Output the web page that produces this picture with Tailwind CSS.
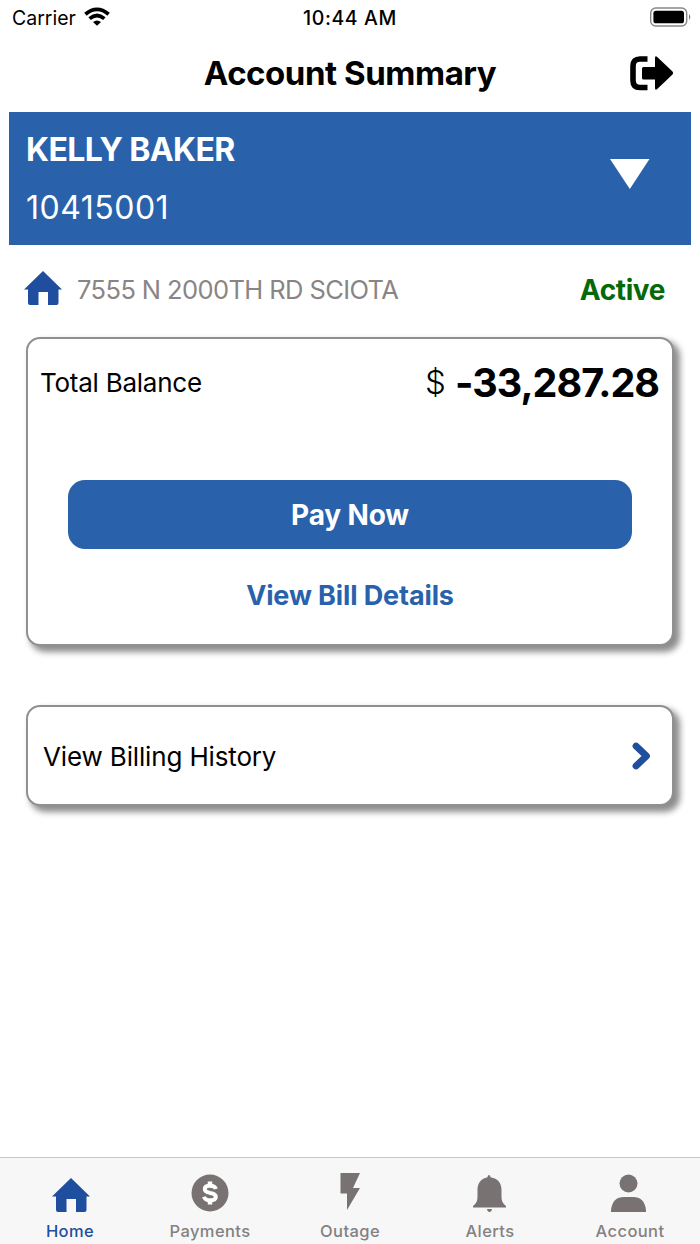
<!DOCTYPE html>
<html lang="en">
<head>
<meta charset="utf-8">
<title>Account Summary</title>
<script src="https://cdn.jsdelivr.net/npm/@tailwindcss/browser@4"></script>
</head>
<body class="bg-white">
<div class="flex flex-col w-[700px] h-[1244px] overflow-hidden bg-white font-['Inter',sans-serif] text-black whitespace-nowrap">
  <header class="h-9 shrink-0 grid grid-cols-3 items-center pl-3 pr-[9px] text-[19.5px] leading-9">
    <div class="flex items-center gap-2">
      <span>Carrier</span>
      <svg class="mt-[-3px]" width="26" height="19" viewBox="0 0 26 19"><g fill="none" stroke="#000" stroke-width="3.8"><path d="M1.4 7.2Q13 -2.4 24.600 7.2"/><path d="M5.600 11.600Q13 5.400 20.400 11.600"/></g><path d="M9 15Q13 11.800 17 15L13 18.800Z"/></svg>
    </div>
    <span class="text-center font-medium tracking-[0.6px] -ml-[3px]">10:44 AM</span>
    <svg class="justify-self-end mt-[-2px] -mr-px" width="42" height="20" viewBox="0 0 42 20"><rect x="0.700" y="1" width="36" height="18" rx="5" fill="none" stroke="#888" stroke-width="1.4"/><rect x="3.400" y="3.700" width="30.600" height="12.600" rx="2.600"/><path d="M39 7Q41.600 10 39 13Z" fill="#777"/></svg>
  </header>

  <div class="h-[76px] shrink-0 grid grid-cols-[1fr_auto_1fr] items-center pr-[26px] pl-[26px]">
    <h1 class="col-start-2 text-[33px] font-bold leading-[74px] mb-[2px] tracking-[-0.45px]">Account Summary</h1>
    <svg class="justify-self-end mt-[-2px] -mr-px" width="46" height="36" viewBox="0 0 46 36"><path d="M18.500 4H11Q4 4 4 11V25.500Q4 32.500 11 32.500H18.500" fill="none" stroke="#000" stroke-width="5.600"/><path d="M14.500 12H26V3Q26 0 28.500 2.200L43.500 16.400Q45 18 43.500 19.600L28.500 33.800Q26 36 26 33V24.500H14.500Q13 24.500 13 23V13.500Q13 12 14.500 12Z"/></svg>
  </div>

  <section class="mx-[9px] h-[133px] shrink-0 bg-[#2962ab] text-white flex justify-between pl-[17px] pr-[41px]">
    <div class="flex flex-col pt-[9px]">
      <div class="h-[58px] text-[32px] leading-[58px] font-bold tracking-[-0.6px]">KELLY BAKER</div>
      <div class="h-[58px] text-[32px] leading-[58px] tracking-[0.5px]">10415001</div>
    </div>
    <svg class="mt-[47px]" width="40" height="31" viewBox="0 0 40 31" fill="#fff"><path d="M0 0H39.500L19.800 30Z"/></svg>
  </section>

  <div class="h-[91px] shrink-0 flex items-center pl-6 pr-[35px] pb-[2px]">
    <svg class="mt-[-3px]" width="38" height="34" viewBox="0 0 38 34" fill="#1f4e9e"><path d="M19 0L38 18.500H34.500V32Q34.500 34 32.500 34H24V21H14.500V34H6Q4 34 4 32V18.500H0Z"/></svg>
    <span class="ml-[15px] mt-[2px] text-[25.5px] tracking-[-0.6px] text-[#8a8585]">7555 N 2000TH RD SCIOTA</span>
    <span class="ml-auto text-[28px] font-bold tracking-[-0.4px] text-[#046a08]">Active</span>
  </div>

  <main class="px-[26px] pt-px flex flex-col gap-[59px]">
    <section class="h-[309px] border-2 border-[#918f8f] rounded-[14px] shadow-[5px_5px_6px_1px_rgba(0,0,0,0.45)] bg-white flex flex-col pt-[14px]">
      <div class="h-[60px] flex items-center justify-between pl-[12px] pr-[13px]">
        <span class="text-[26px] tracking-[-0.25px] -mt-[2px]">Total Balance</span>
        <div class="flex items-center gap-[9px] -mt-px"><span class="text-[33px] font-light">$</span><span class="mt-[2px] text-[39.5px] font-bold tracking-[-1px]">-33,287.28</span></div>
      </div>
      <button class="mx-[40px] mt-[67px] h-[69px] shrink-0 rounded-[17px] bg-[#2962ab] text-white text-[28px] font-bold tracking-[-0.15px] pt-px">Pay Now</button>
      <a class="mt-[19px] h-[56px] leading-[56px] text-center text-[27px] font-bold tracking-[-0.12px] text-[#2962ab]">View Bill Details</a>
    </section>
    <section class="h-[101px] border-2 border-[#918f8f] rounded-[14px] shadow-[5px_5px_6px_1px_rgba(0,0,0,0.45)] bg-white flex items-center justify-between pl-[15px] pr-[21px]">
      <span class="text-[26px] mt-[2px] tracking-[-0.15px]">View Billing History</span>
      <svg width="19" height="28" viewBox="0 0 19 28"><path d="M4 4L14.500 14L4 24" fill="none" stroke="#1f4e9e" stroke-width="6.800" stroke-linecap="round" stroke-linejoin="round"/></svg>
    </section>
  </main>

  <nav class="mt-auto h-[87px] shrink-0 border-t border-[#c6c6c6] bg-[#f7f7f7] grid grid-cols-5 text-[16.5px] font-medium text-[#838181] tracking-[0.4px]">
    <div class="flex flex-col items-center text-[#1f4e9e]">
      <svg class="mt-[13px]" width="40" height="42" viewBox="0 0 40 42" fill="#1f4e9e"><path d="M21 7L40 25.5H36.500V39Q36.500 41 34.500 41H26V28H16.500V41H8Q6 41 6 39V25.500H2Z"/></svg>
      <span class="mt-[6px] leading-6">Home</span>
    </div>
    <div class="flex flex-col items-center">
      <svg class="mt-[13px]" width="40" height="42" viewBox="0 0 40 42"><circle cx="20" cy="22" r="18.500" fill="#787372"/><path d="M25.800 18Q25 14.800 20 14.800Q14.800 14.800 14.800 18Q14.800 21 20 21.900Q25.800 22.700 25.800 26Q25.800 29.300 20 29.300Q15 29.300 14 25.800" fill="none" stroke="#fff" stroke-width="4"/><path d="M20 10.500V15M20 29V33.500" stroke="#fff" stroke-width="4.500"/></svg>
      <span class="mt-[6px] leading-6">Payments</span>
    </div>
    <div class="flex flex-col items-center">
      <svg class="mt-[13px]" width="40" height="42" viewBox="0 0 40 42" fill="#787372"><path d="M10.500 2H30L23 17H30L17 39V22.500H10.500Z"/></svg>
      <span class="mt-[6px] leading-6">Outage</span>
    </div>
    <div class="flex flex-col items-center">
      <svg class="mt-[13px]" width="40" height="42" viewBox="0 0 40 42" fill="#787372"><path d="M17.800 5Q19 3.200 20.200 5L20.500 6.200C28 7.500 31.500 12 31.500 19V26Q31.500 32 36 35V36.500H3V35Q7.500 32 7.500 26V19C7.500 12 11 7.500 17.500 6.200Z"/><path d="M17 38H22Q21.500 41 19.500 41T17 38Z"/></svg>
      <span class="mt-[6px] leading-6">Alerts</span>
    </div>
    <div class="flex flex-col items-center">
      <svg class="mt-[13px]" width="40" height="42" viewBox="0 0 40 42" fill="#787372"><circle cx="18.500" cy="12.500" r="9"/><path d="M1 41V39Q2.500 26 14 26H23Q34.500 26 36 39V41Z"/></svg>
      <span class="mt-[6px] leading-6">Account</span>
    </div>
  </nav>
</div>
</body>
</html>
